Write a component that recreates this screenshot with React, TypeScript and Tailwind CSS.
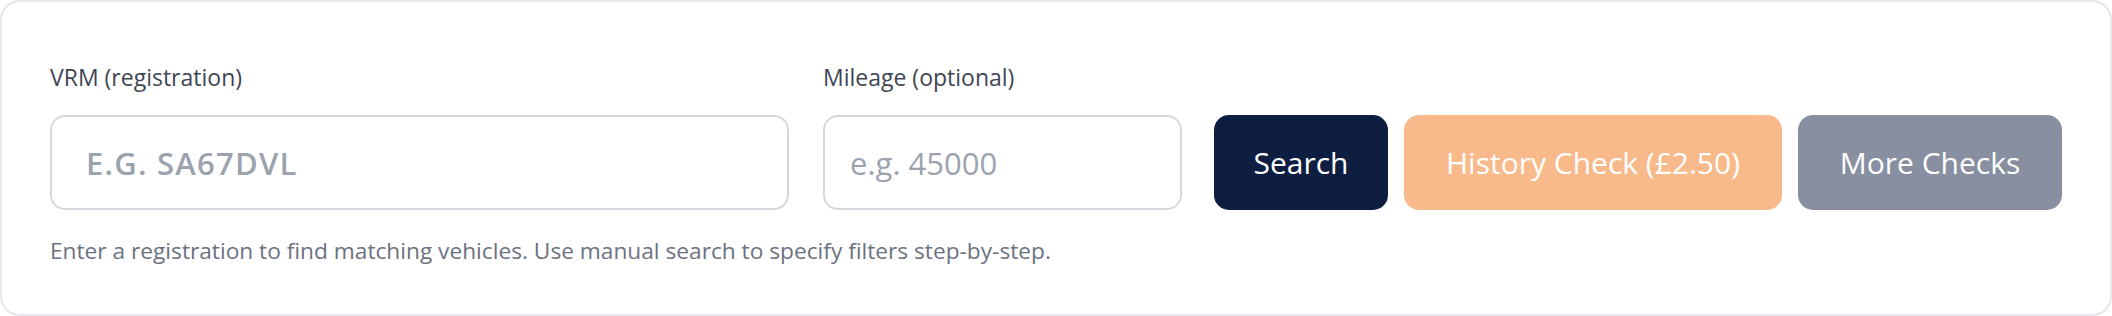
import React from 'react';

export default function App() {
  return (
    <div className="w-[2112px] h-[316px] bg-white font-['Open_Sans',sans-serif]">
      <div className="h-full rounded-[20px] border-2 border-[#e5e7eb] bg-white pl-[48px] pr-[48px] pt-[60px]">
        <div className="flex items-end">
          {/* VRM */}
          <div className="flex-1 flex flex-col">
            <label className="text-[23px] leading-[30px] text-[#3f4654]">VRM (registration)</label>
            <input
              placeholder="e.g. SA67DVL"
              className="mt-[23px] h-[95px] w-full rounded-[15px] border-2 border-[#d4d7dd] bg-white pl-[34px] text-[31px] font-semibold uppercase tracking-[0.04em] text-[#111827] outline-none placeholder:text-[#9ca3af]"
            />
          </div>

          {/* Mileage */}
          <div className="ml-[34px] flex w-[359px] flex-col">
            <label className="text-[23px] leading-[30px] text-[#3f4654]">Mileage (optional)</label>
            <input
              placeholder="e.g. 45000"
              className="mt-[23px] h-[95px] w-full rounded-[15px] border-2 border-[#d4d7dd] bg-white pl-[25px] text-[31px] text-[#111827] outline-none placeholder:text-[#9ca3af]"
            />
          </div>

          {/* Actions */}
          <div className="ml-[32px] flex gap-[16px]">
            <button className="flex h-[95px] w-[174px] items-center justify-center rounded-[15px] bg-[#0e1e40] text-[30px] text-white">
              Search
            </button>
            <button className="flex h-[95px] w-[378px] items-center justify-center rounded-[15px] bg-[#f9ba8b] text-[30px] text-white">
              History Check (£2.50)
            </button>
            <button className="flex h-[95px] w-[264px] items-center justify-center rounded-[15px] bg-[#878fa0] text-[30px] text-white">
              More Checks
            </button>
          </div>
        </div>

        <p className="mt-[26px] text-[22.7px] leading-[30px] text-[#6b7280]">
          Enter a registration to find matching vehicles. Use manual search to specify filters step-by-step.
        </p>
      </div>
    </div>
  );
}
